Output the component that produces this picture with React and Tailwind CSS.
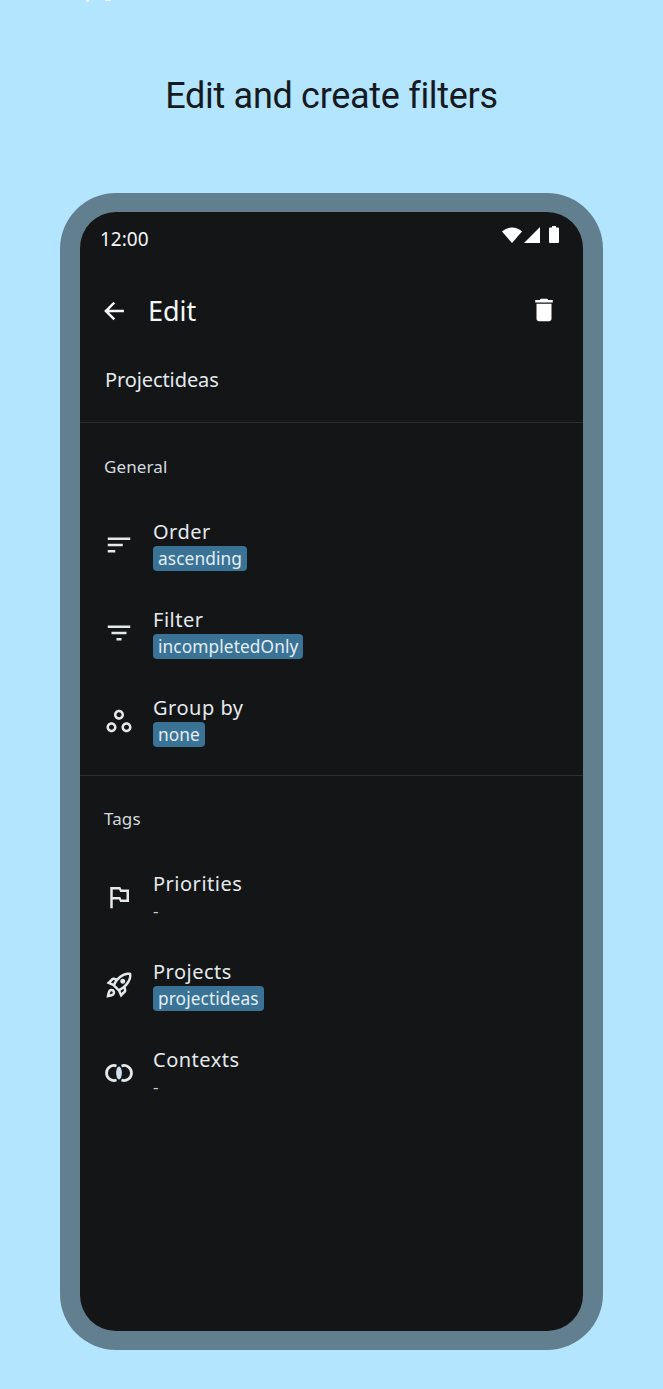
import React from "react";

const Ic = ({ children }) => (
  <svg width="30" height="30" viewBox="0 0 24 24" fill="#e4e9ec" className="shrink-0">
    {children}
  </svg>
);

const Row = ({ icon, title, chip }) => (
  <div className="h-[88px] shrink-0 flex items-center pl-[24px]">
    <div className="w-[49px] flex">{icon}</div>
    <div className="flex flex-col">
      <div className="text-[20px] leading-[24px] tracking-[0.5px] text-[#e4e9ec]">{title}</div>
      {chip ? (
        <div className="self-start mt-[2px] h-[25px] rounded-[4px] bg-[#3a7396] px-[5px] text-[17.3px] leading-[25px] tracking-[0.1px] text-[#e4eef3]">{chip}</div>
      ) : (
        <div className="mt-[2px] h-[25px] text-[17px] leading-[25px] text-[#c8ced2]">-</div>
      )}
    </div>
  </div>
);

export default function App() {
  return (
    <div className="relative w-[663px] h-[1389px] bg-[#b3e5fe] overflow-hidden flex flex-col items-center font-['Noto_Sans',sans-serif]">
      <div className="absolute left-[86px] top-0 w-[3px] h-[2px] rounded-b-full bg-white/80" />
      <div className="absolute left-[105px] top-0 w-[6px] h-[1px] rounded-b-full bg-white/80" />
      <h1 className="mt-[72px] h-[48px] text-[36px] leading-[48px] font-normal text-[#161a1e] font-['Roboto',sans-serif] tracking-[-0.3px]">Edit and create filters</h1>
      <div className="mt-[73px] w-[543px] h-[1157px] rounded-[56px] bg-[#627f8f] px-[20px] pt-[19px]">
        <div className="w-[503px] h-[1119px] rounded-[36px] bg-[#131517] flex flex-col overflow-hidden">
          <div className="h-[69px] shrink-0 pl-[20px] pr-[24px] pt-[15px] flex items-start justify-between">
            <span className="text-[19px] leading-[24px] text-[#f4f5f6]">12:00</span>
            <div className="flex items-center -mt-[1px]">
              <svg width="20" height="16" viewBox="0 0 20 16" fill="#fff"><path d="M0 4.500C2.800 1.800 6.200.5 10 .5s7.200 1.300 10 4L10 16z" /></svg>
              <svg width="18" height="16" viewBox="0 0 18 16" fill="#fff" className="ml-[1px]"><path d="M17 0v16H1z" /></svg>
              <svg width="10" height="17" viewBox="0 0 10 17" fill="#fff" className="ml-[8px]"><path d="M3 0h4v1.500h2a1 1 0 0 1 1 1V16a1 1 0 0 1-1 1H1a1 1 0 0 1-1-1V2.500a1 1 0 0 1 1-1h2z" /></svg>
            </div>
          </div>
          <div className="h-[60px] shrink-0 pl-[21px] pr-[24px] flex items-center justify-between">
            <div className="flex items-center">
              <svg width="26" height="26" viewBox="0 0 24 24" fill="none" stroke="#f6f7f8" strokeWidth="2.300" strokeLinecap="square"><path d="M20 12H5M11.500 5 4.500 12l7 7" /></svg>
              <span className="ml-[21px] text-[27px] leading-[36px] text-[#f3f5f6]">Edit</span>
            </div>
            <svg width="30" height="30" viewBox="0 0 24 24" fill="#fff" className="-translate-y-[1px]"><path d="M6 19c0 1.100.9 2 2 2h8c1.100 0 2-.9 2-2V7H6zM19 4h-3.500l-1-1h-5l-1 1H5v2h14z" /></svg>
          </div>
          <div className="h-[82px] shrink-0 pt-[23px] pl-[25px] border-b border-[#2c2f32] text-[20px] leading-[32px] tracking-[-0.1px] text-[#e4e9ec]">Projectideas</div>
          <div className="h-[44px] shrink-0 mt-[22px] mb-[12px] pl-[24px] text-[17px] leading-[44px] tracking-[0.1px] text-[#d5dade]">General</div>
          <Row title="Order" chip="ascending" icon={<Ic><path d="M3 18h6v-2H3v2zM3 6v2h18V6H3zm0 7h12v-2H3v2z" /></Ic>} />
          <Row title="Filter" chip="incompletedOnly" icon={<Ic><path d="M10 18h4v-2h-4v2zM3 6v2h18V6H3zm3 7h12v-2H6v2z" /></Ic>} />
          <Row title="Group by" chip="none" icon={<Ic><path d="M6 13c-2.200 0-4 1.800-4 4s1.800 4 4 4 4-1.800 4-4-1.800-4-4-4zm0 6c-1.100 0-2-.9-2-2s.9-2 2-2 2 .9 2 2-.9 2-2 2zm6-16C9.800 3 8 4.800 8 7s1.800 4 4 4 4-1.800 4-4-1.800-4-4-4zm0 6c-1.100 0-2-.9-2-2s.9-2 2-2 2 .9 2 2-.9 2-2 2zm6 4c-2.200 0-4 1.800-4 4s1.800 4 4 4 4-1.800 4-4-1.800-4-4-4zm0 6c-1.100 0-2-.9-2-2s.9-2 2-2 2 .9 2 2-.9 2-2 2z" /></Ic>} />
          <div className="mt-[10px] shrink-0 border-t border-[#2c2f32]" />
          <div className="h-[44px] shrink-0 mt-[21px] mb-[12px] pl-[24px] text-[17px] leading-[44px] tracking-[0.1px] text-[#d5dade]">Tags</div>
          <Row title="Priorities" icon={<Ic><path d="M14 6l-1-2H5v17h2v-7h5l1 2h7V6h-6zm4 8h-4l-1-2H7V6h5l1 2h5v6z" /></Ic>} />
          <Row title="Projects" chip="projectideas" icon={
            <Ic>
              <path d="M6 15c-.83 0-1.580.34-2.120.88C2.700 17.060 2 22 2 22s4.940-.7 6.120-1.880A2.996 2.996 0 0 0 6 15zm.71 3.710c-.28.28-2.170.76-2.170.76s.47-1.880.76-2.170c.17-.19.42-.3.7-.3a1.003 1.003 0 0 1 .71 1.710zm10.710-5.060c6.360-6.360 4.240-11.310 4.240-11.310S16.710.220 10.350 6.580l-2.490-.5a2.070 2.070 0 0 0-1.870.56L2 10.640l5 2.140L11.220 17l2.140 5 3.990-3.990c.47-.47.68-1.150.55-1.810l-.48-2.550zM7.410 10.830l-1.910-.82 1.970-1.970 1.440.29c-.57.830-1.080 1.700-1.500 2.500zm6.580 7.590-.82-1.910c.8-.42 1.670-.93 2.490-1.500l.29 1.440-1.960 1.970zM16 12.240c-1.320 1.320-3.380 2.400-4.040 2.730l-2.930-2.930c.32-.65 1.400-2.710 2.730-4.040 4.680-4.680 8.230-3.930 8.230-3.930s.75 3.550-3.990 8.170zM15 11c1.100 0 2-.9 2-2s-.9-2-2-2-2 .9-2 2 .9 2 2 2z" />
            </Ic>
          } />
          <Row title="Contexts" icon={
            <Ic>
              <path d="M10 6.340A6 6 0 1 0 10 17.660M14 6.340A6 6 0 1 1 14 17.660" fill="none" stroke="#e4e9ec" strokeWidth="2.200" />
              <ellipse cx="12" cy="12" rx="2.300" ry="5.200" fill="#cfe0e8" />
            </Ic>
          } />
        </div>
      </div>
    </div>
  );
}
